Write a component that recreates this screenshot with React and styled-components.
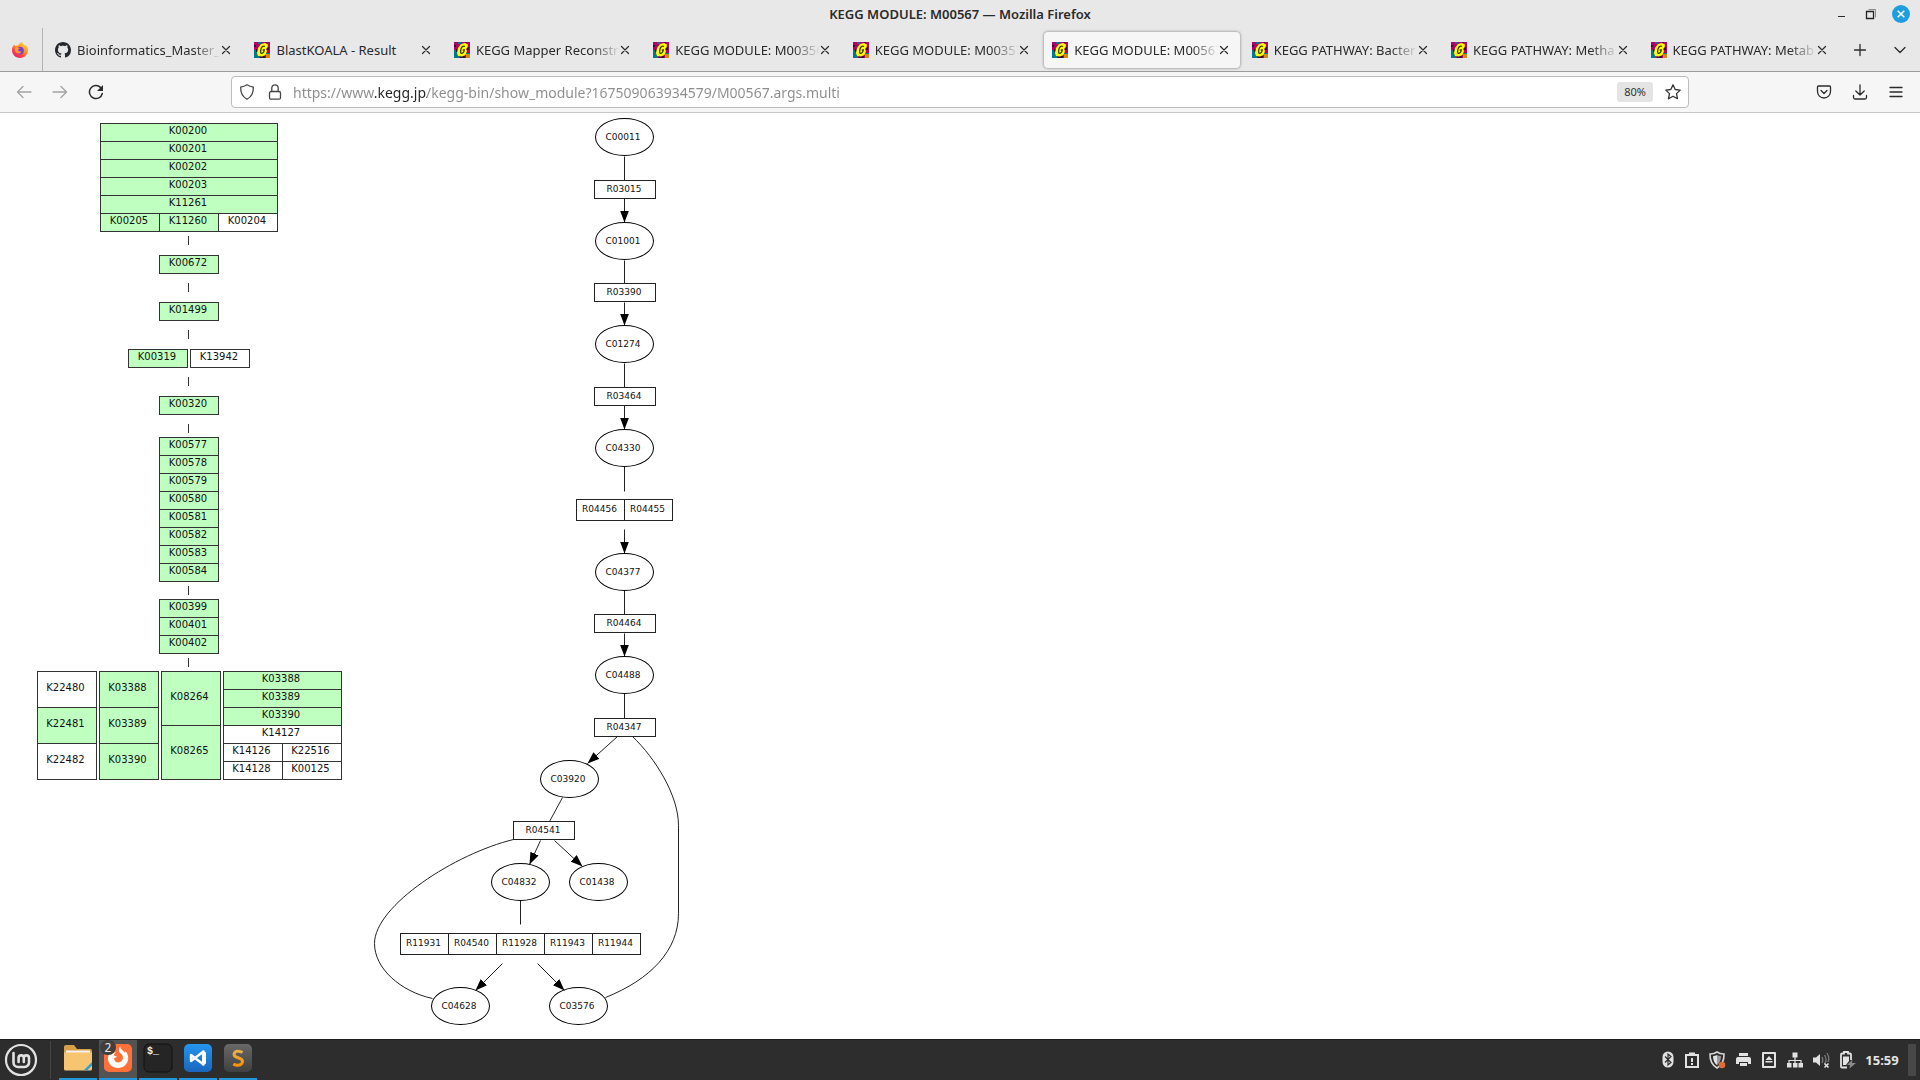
import React from 'react';
import styled, { createGlobalStyle, css } from 'styled-components';

const UI_FONT = '"Noto Sans", "Open Sans", sans-serif';
const GRAPH_FONT = '"DejaVu Sans", sans-serif';

const GlobalStyle = createGlobalStyle`
  *, *::before, *::after { box-sizing: border-box; }
  html, body { margin: 0; padding: 0; }
  body { background: #fff; font-family: ${UI_FONT}; color: #1f1f1f; }
  button, input { font: inherit; color: inherit; border: 0; background: none; padding: 0; margin: 0; }
  svg { display: block; flex: none; }
`;

const Screen = styled.div`
  display: flex;
  flex-direction: column;
  min-height: 100vh;
`;

/* ---------- title bar ---------- */

const TitleBar = styled.header`
  display: grid;
  grid-template-columns: 1fr auto 1fr;
  align-items: center;
  height: 28px;
  background: #e8e8e8;
`;

const WindowTitle = styled.h1`
  grid-column: 2;
  margin: 0;
  font-size: 13px;
  line-height: 20px;
  font-weight: 600;
  color: #2b2b2b;
`;

const WindowControls = styled.div`
  display: flex;
  justify-content: flex-end;
  gap: 10px;
  padding-right: 9px;
`;

const ControlButton = styled.button`
  display: grid;
  place-items: center;
  width: 20px;
  height: 20px;
`;

/* ---------- tabs ---------- */

const TabBar = styled.nav`
  display: flex;
  height: 44px;
  background: #e8e8e8;
  border-bottom: 1px solid #9c9c9c;
`;

const PinnedTab = styled.button`
  display: grid;
  place-items: center;
  width: 43px;
  padding-right: 2px;
  border-right: 1px solid #b4b4b4;
`;

const TabList = styled.div`
  flex: 1;
  display: flex;
  min-width: 0;
  padding: 4px 0 3px 2px;
`;

const Tab = styled.div`
  flex: 1 1 0;
  min-width: 0;
  display: flex;
  align-items: center;
  gap: 6px;
  margin: 0 2px;
  padding: 0 8px;
  border-radius: 4px;
  ${(p) => p.$active && css`
    background: #f6f6f6;
    box-shadow: 0 0 3px rgba(0, 0, 0, 0.5);
  `}
`;

const TabTitle = styled.button`
  flex: 1;
  min-width: 0;
  overflow: hidden;
  white-space: nowrap;
  text-align: left;
  font-size: 13px;
  line-height: 20px;
  color: #2a2a2a;
  ${(p) => p.$fade && css`
    mask-image: linear-gradient(to left, transparent, #000 28px);
  `}
`;

const TabClose = styled.button`
  display: grid;
  place-items: center;
  width: 16px;
  height: 20px;
  margin-left: -9px;
`;

const TabBarButton = styled.button`
  display: grid;
  place-items: center;
  width: 40px;
`;

/* ---------- toolbar ---------- */

const Toolbar = styled.div`
  display: flex;
  align-items: center;
  justify-content: space-between;
  height: 41px;
  padding: 0 6px;
  background: #f6f6f6;
  border-bottom: 1px solid #c8c8c8;
`;

const ToolGroup = styled.div`
  display: flex;
  justify-content: ${(p) => p.$end ? 'flex-end' : 'flex-start'};
  width: 225px;
`;

const ToolButton = styled.button`
  display: grid;
  place-items: center;
  width: 36px;
  height: 32px;
`;

const AddressBox = styled.form`
  flex: 1;
  display: flex;
  align-items: center;
  height: 32px;
  padding: 0 1px;
  background: #fff;
  border: 1px solid #bdbdbd;
  border-radius: 4px;
`;

const AddressIcon = styled.button`
  display: grid;
  place-items: center;
  width: 28px;
  height: 28px;
`;

const AddressInput = styled.input`
  flex: 1;
  min-width: 0;
  height: 28px;
  padding: 0 4px;
  font-size: 14px;
  line-height: 20px;
  outline: none;
  color: transparent;
  caret-color: #222;
  background: linear-gradient(to right, #8c8c8c 85px, #222 85px, #222 138px, #8c8c8c 138px);
  background-clip: text;
  -webkit-background-clip: text;
`;

const ZoomBadge = styled.button`
  width: 36px;
  height: 20px;
  margin-right: 6px;
  border-radius: 3px;
  background: #e4e4e4;
  font-size: 11px;
  line-height: 20px;
  color: #333;
`;

/* ---------- page ---------- */

const Page = styled.main`
  flex: 1;
  display: flex;
  align-items: flex-start;
  background: #fff;
  font-family: ${GRAPH_FONT};
  color: #111;
`;

const ModuleColumn = styled.section`
  display: flex;
  flex-direction: column;
  align-items: center;
  width: 304px;
  margin: 10px 19px 0 37px;
`;

const Block = styled.div`
  display: grid;
  grid-template-columns: repeat(${(p) => p.$cols || 1}, 59px);
  grid-auto-rows: 18px;
  padding: 0 1px 1px 0;
`;

const BlockRow = styled.div`
  display: flex;
  gap: 2px;
`;

const Gene = styled.div`
  display: flex;
  align-items: center;
  justify-content: center;
  grid-column: span ${(p) => p.$w || 1};
  grid-row: span ${(p) => p.$h || 1};
  margin: 0 -1px -1px 0;
  padding: 0 2px 3px 0;
  border: 1px solid #333;
  background: ${(p) => p.$on ? '#bfffbf' : '#fff'};
  font-size: 10px;
  line-height: 12px;
`;

const Connector = styled.div`
  width: 1px;
  height: 9px;
  margin: ${(p) => p.$above ? 9 : 4}px 1px ${(p) => p.$below ? 10 : 4}px 0;
  background: #333;
`;

const Graph = styled.section`
  position: relative;
  width: 340px;
  height: 920px;
`;

const Edges = styled.svg`
  position: absolute;
  inset: 0;
`;

const Node = styled.div`
  position: absolute;
  left: ${(p) => p.$x}px;
  top: ${(p) => p.$y}px;
  display: flex;
  border: 1px solid #222;
  font-size: 9px;
  line-height: 12px;
`;

const Compound = styled(Node)`
  align-items: center;
  justify-content: center;
  width: 59px;
  height: 38px;
  padding: 0 3px 1px 0;
  border-color: #000;
  border-radius: 50%;
`;

const Reaction = styled(Node)`
  height: ${(p) => p.$group ? 22 : 19}px;
`;

const ReactionCell = styled.span`
  display: flex;
  align-items: center;
  justify-content: center;
  width: ${(p) => p.$group ? 47 : 60}px;
  padding: 0 2px 2px 0;
  & + & {
    width: 48px;
    border-left: 1px solid #222;
  }
`;

/* ---------- taskbar ---------- */

const Taskbar = styled.footer`
  display: flex;
  align-items: stretch;
  height: 41px;
  background: #2d2d2d;
  border-top: 1px solid #1e1e1e;
`;

const MenuButton = styled.button`
  display: grid;
  place-items: center;
  width: 42px;
`;

const PanelDivider = styled.span`
  width: 1px;
  margin: 1px 8px;
  background: #454545;
`;

const Launchers = styled.div`
  display: flex;
  gap: 2px;
`;

const Launcher = styled.button`
  position: relative;
  display: grid;
  place-items: center;
  width: 38px;
  padding-bottom: 2px;
  border-bottom: 2px solid #2196d8;
  background: ${(p) => p.$active ? '#535353' : 'transparent'};
`;

const WindowCount = styled.span`
  position: absolute;
  left: 1px;
  top: 0;
  width: 16px;
  height: 15px;
  border-radius: 8px;
  background: #3f3f3f;
  color: #e6e6e6;
  font-size: 12px;
  line-height: 15px;
`;

const Tray = styled.div`
  display: flex;
  align-items: center;
  gap: 2px;
  margin-left: auto;
  padding-right: 4px;
`;

const TrayButton = styled.button`
  display: grid;
  place-items: center;
  width: ${(p) => p.$narrow ? 22 : 24}px;
  height: 24px;
`;

const Clock = styled.time`
  width: 42px;
  text-align: center;
  font-size: 13px;
  line-height: 20px;
  font-weight: 700;
  color: #e4e4e4;
`;

const ShowDesktop = styled.button`
  width: 8px;
  height: 32px;
  margin-left: 3px;
  background: #484848;
`;

/* ---------- icons ---------- */

const Stroke = ({ size = 16, color = '#2b2b2b', width = 1.3, children }) => (
  <svg width={size} height={size} viewBox="0 0 16 16" fill="none" stroke={color} strokeWidth={width} strokeLinecap="round" strokeLinejoin="round">
    {children}
  </svg>
);

const KeggIcon = () => (
  <svg width="16" height="16" viewBox="0 0 16 16">
    <path fill="#b4006c" d="M0 0h16v16H0z" />
    <path fill="#00788c" d="M0 8h3v4h2v4H0zM4 0h3v2H4zM12 11h4v5h-4z" />
    <path fill="#3a1030" d="M0 3h2v2H0zM2 7h2v3H2zM6 14h5v2H6zM13 5h2v3h-2zM11 0h2v1h-2z" />
    <path fill="#d08a10" d="M12 12h4v4h-4z" />
    <path fill="#ff0" d="M7 2l4-1 3 1.500-.5 3L12 7l1 2-1.500 4-3.500 1.500-4-.5-1-3 1-5z" />
    <path fill="none" stroke="#3c3c10" strokeWidth="1.300" d="M11 4.500C9 3.500 7.500 5 7 7s-.8 4.500.8 4.300S10 10 10.300 8H8.700" />
  </svg>
);

const GithubIcon = () => (
  <svg width="16" height="16" viewBox="0 0 16 16" fill="#24292f">
    <path d="M8 0C3.580 0 0 3.580 0 8c0 3.540 2.290 6.530 5.470 7.590.4.070.55-.17.55-.38 0-.19-.01-.82-.01-1.490-2.010.37-2.530-.49-2.690-.94-.09-.23-.48-.94-.82-1.130-.28-.15-.68-.52-.01-.53.63-.01 1.080.58 1.230.82.72 1.210 1.870.87 2.330.66.07-.52.28-.87.51-1.070-1.780-.2-3.640-.89-3.640-3.950 0-.87.31-1.590.82-2.150-.08-.2-.36-1.020.08-2.120 0 0 .67-.21 2.200.82.64-.18 1.320-.27 2-.27s1.360.09 2 .27c1.530-1.040 2.200-.82 2.200-.82.44 1.100.16 1.920.08 2.120.51.56.82 1.270.82 2.150 0 3.070-1.870 3.750-3.650 3.950.29.25.54.73.54 1.480 0 1.070-.01 1.930-.01 2.200 0 .21.15.46.55.38A8.010 8.010 0 0 0 16 8c0-4.420-3.580-8-8-8z" />
  </svg>
);

const FirefoxIcon = () => (
  <svg width="16" height="16" viewBox="0 0 16 16">
    <defs>
      <linearGradient id="fox" x1="0.9" y1="0" x2="0.2" y2="1">
        <stop offset="0" stopColor="#ffe536" />
        <stop offset="0.45" stopColor="#ff9228" />
        <stop offset="0.75" stopColor="#ff3b4c" />
        <stop offset="1" stopColor="#e31587" />
      </linearGradient>
    </defs>
    <path fill="url(#fox)" d="M10 0c.3 1.700 2 2.500 3.500 4 .3-.2.300-.8.200-1.200C15 4.200 16 6.300 16 8.300 16 12.600 12.500 16 8 16S0 12.600 0 8.300C0 6 .8 4 2.300 2.600L3 4.200C3.800 3.500 5 3.300 6 3.500 7 1.500 8.500.5 10 0z" />
    <circle cx="8" cy="8.600" r="3.800" fill="#7540d8" />
    <path fill="#ff9a2c" d="M3.200 5.400c2-.9 3.300.2 4.800 1.200-1.500.2-2 1.100-1.800 1.800.3 1.300 2.300 1.500 3.300.5-.3 2.500-3.500 3.400-5.300 1.800C3 9.500 2.600 7.300 3.200 5.400z" />
  </svg>
);

const CloseIcon = () => (
  <Stroke size={16} width={1.2}><path d="M4.500 4.500l7 7M11.500 4.500l-7 7" /></Stroke>
);

const MintIcon = () => (
  <svg width="34" height="34" viewBox="0 0 34 34" fill="none" stroke="#e2e2e2">
    <circle cx="17" cy="17" r="15" strokeWidth="2.200" />
    <path strokeWidth="2.600" strokeLinecap="round" strokeLinejoin="round" d="M9.500 10v9.500a4.500 4.500 0 0 0 4.500 4.500h6.500a4.500 4.500 0 0 0 4.500-4.500V15a2.600 2.600 0 0 0-5.200 0v4M19.800 15a2.600 2.600 0 0 0-5.200 0v4" />
  </svg>
);

const FolderIcon = () => (
  <svg width="28" height="26" viewBox="0 0 28 26">
    <path fill="#d9a04a" d="M0 2q0-2 2-2h8l3 4h13q2 0 2 2v6H0z" />
    <path fill="#f2f2f2" d="M2 5.500h24v4H2z" />
    <path fill="#f7c471" d="M0 7.500h28V24q0 1.500-1.500 1.500h-25Q0 25.500 0 24z" />
    <path fill="#2a9fd8" d="M28 17V20.500L23 25.500H19.500z" />
  </svg>
);

const FirefoxTile = () => (
  <svg width="30" height="30" viewBox="0 0 30 30">
    <rect x="1" y="1" width="28" height="28" rx="5" fill="#ff7139" />
    <path fill="#fff" d="M17 3.500c.3 2.600 3 4 5 6.300.3-.5.400-1.200.3-1.800 2 2 3 4.700 2.900 7.300C25 21 20.600 25 15 25S5 20.800 5 15.500c0-3 1-5.500 3-7.300.1 1 .3 1.600.8 2.200C10 9.500 11.500 9.300 13 9.600c-1.500.7-2.200 1.800-2 2.600.3.700 1.500 1 2.800 1-.5 1.300-1.800 1.500-2.800 2 .2 2.800 2 4.300 4.300 4.300 2.800 0 4.700-2.200 4.700-4.700 0-1.800-.9-3.300-2.200-4.200C16 9.500 15 6.500 17 3.500z" />
  </svg>
);

const TerminalTile = () => (
  <svg width="30" height="30" viewBox="0 0 30 30">
    <rect x="1" y="1" width="28" height="28" rx="5" fill="#252525" stroke="#111" />
    <text x="4" y="11" fill="#f0f0f0" fontFamily="Liberation Mono, monospace" fontWeight="700" fontSize="10">$_</text>
  </svg>
);

const CodeTile = () => (
  <svg width="30" height="30" viewBox="0 0 30 30">
    <defs><linearGradient id="code" x2="0" y2="1"><stop stopColor="#2595ee" /><stop offset="1" stopColor="#1966bd" /></linearGradient></defs>
    <rect x="1" y="1" width="28" height="28" rx="5" fill="url(#code)" />
    <path fill="none" stroke="#fff" strokeWidth="2.400" strokeLinejoin="round" d="M8 12v6l12.500-9.500v13z" />
    <path fill="#fff" d="M19 7.500l4 2v11l-4 2z" />
  </svg>
);

const SublimeTile = () => (
  <svg width="30" height="30" viewBox="0 0 30 30">
    <defs>
      <linearGradient id="subl" x2="0" y2="1"><stop stopColor="#686868" /><stop offset="1" stopColor="#404040" /></linearGradient>
      <linearGradient id="sublS" x2="0" y2="1"><stop stopColor="#e8b04c" /><stop offset="1" stopColor="#ff9000" /></linearGradient>
    </defs>
    <rect x="1" y="1" width="28" height="28" rx="5" fill="url(#subl)" />
    <path fill="none" stroke="url(#sublS)" strokeWidth="3" d="M19.500 9.500c-2-1.300-4-1.500-5.500-1.200-2.300.5-3.300 2.200-2.800 4 1 3.200 8 1.800 8.300 6 .2 2-1.500 3.700-4.200 3.900-1.800.1-3.500-.3-5-1.300" />
  </svg>
);

/* ---------- data ---------- */

const TABS = [
  { title: 'Bioinformatics_Master_', icon: 'github', fade: true },
  { title: 'BlastKOALA - Result' },
  { title: 'KEGG Mapper Reconstru', fade: true },
  { title: 'KEGG MODULE: M00356', fade: true },
  { title: 'KEGG MODULE: M00357', fade: true },
  { title: 'KEGG MODULE: M00567', fade: true, active: true },
  { title: 'KEGG PATHWAY: Bacter', fade: true },
  { title: 'KEGG PATHWAY: Metha', fade: true },
  { title: 'KEGG PATHWAY: Metab', fade: true },
];

const on = (id, w, h) => ({ id, w, h, on: true });
const off = (id, w, h) => ({ id, w, h, on: false });

const MODULE = [
  [{ cols: 3, genes: [on('K00200', 3), on('K00201', 3), on('K00202', 3), on('K00203', 3), on('K11261', 3), on('K00205'), on('K11260'), off('K00204')] }],
  [{ genes: [on('K00672')] }],
  [{ genes: [on('K01499')] }],
  [{ genes: [on('K00319')] }, { genes: [off('K13942')] }],
  [{ genes: [on('K00320')] }],
  [{ genes: ['K00577', 'K00578', 'K00579', 'K00580', 'K00581', 'K00582', 'K00583', 'K00584'].map((id) => on(id)) }],
  [{ genes: ['K00399', 'K00401', 'K00402'].map((id) => on(id)) }],
  [
    { genes: [off('K22480', 1, 2), on('K22481', 1, 2), off('K22482', 1, 2)] },
    { genes: [on('K03388', 1, 2), on('K03389', 1, 2), on('K03390', 1, 2)] },
    { genes: [on('K08264', 1, 3), on('K08265', 1, 3)] },
    { cols: 2, genes: [on('K03388', 2), on('K03389', 2), on('K03390', 2), off('K14127', 2), off('K14126'), off('K22516'), off('K14128'), off('K00125')] },
  ],
];

const isSingle = (row) => row.every((block) => block.genes.length === 1);

const COMPOUNDS = [
  ['C00011', 235, 5], ['C01001', 235, 109], ['C01274', 235, 212], ['C04330', 235, 316],
  ['C04377', 235, 440], ['C04488', 235, 543], ['C03920', 180, 647], ['C04832', 131, 750],
  ['C01438', 209, 750], ['C04628', 71, 874], ['C03576', 189, 874],
];

const REACTIONS = [
  [['R03015'], 234, 67], [['R03390'], 234, 170], [['R03464'], 234, 274],
  [['R04456', 'R04455'], 216, 386], [['R04464'], 234, 501], [['R04347'], 234, 605],
  [['R04541'], 153, 708], [['R11931', 'R04540', 'R11928', 'R11943', 'R11944'], 40, 820],
];

const LINES = [
  [264, 43, 264, 67], [264, 147, 264, 170], [264, 250, 264, 274], [264, 353, 264, 378],
  [264, 477, 264, 501], [264, 580, 264, 605], [202, 684, 189, 708], [160, 787, 160, 811],
];

const ARROWS = [
  [264, 85, 264, 109], [264, 189, 264, 212], [264, 292, 264, 316], [264, 416, 264, 440],
  [264, 520, 264, 543], [257, 623, 227, 650], [180, 727, 169, 751], [194, 727, 222, 753],
  [142, 850, 115, 877], [177, 850, 204, 877],
];

const TRAY = [
  ['Bluetooth', <g key="i"><rect x="3.500" y="0.500" width="11" height="16" rx="5.500" fill="#e2e2e2" /><path d="M6 5.500l6 6L9 14V3l3 2.500-6 6" fill="none" stroke="#2d2d2d" strokeWidth="1.200" /></g>],
  ['Clipboard', <g key="i" fill="#e2e2e2"><path d="M2 3h14v14H2zM4 5v10h10V5z" fillRule="evenodd" /><path d="M6 1.500h6V5H6zM8 7h2v4H8zM8 12h2v2H8z" /></g>],
  ['Updates', <g key="i"><path d="M9 1c2 1.500 4.500 2 7 2 .2 6-2 11-7 14C4 14 1.800 9 2 3c2.500 0 5-.5 7-2z" fill="none" stroke="#d6d6d6" strokeWidth="1.600" /><path d="M9 4c1.500.8 2.700 1 4 1.200 0 4-1.500 7-4 9z" fill="#9a9a9a" /><path d="M9 4C7.500 4.800 6.300 5 5 5.200c0 4 1.500 7 4 9z" fill="#e2e2e2" /><circle cx="14" cy="14" r="3.300" fill="#e06c3a" /></g>],
  ['Printer', <g key="i" fill="#e2e2e2"><path d="M5 2h9v3H5zM4 6h11q2 0 2 2v5h-3v-2H5v2H2V8q0-2 2-2zM6 12h7v3H6z" /></g>],
  ['Removable drives', <g key="i" fill="#e2e2e2"><path fillRule="evenodd" d="M3 1h12q1 0 1 1v14q0 1-1 1H3q-1 0-1-1V2q0-1 1-1zm1 2v12h10V3z" /><path d="M9 5l3.500 4h-7zM5.500 10h7v1.500h-7z" /></g>],
  ['Network', <g key="i"><path d="M6.500 1.500h5v5h-5zM1 12h4.500v4.500H1zM7 12h4.500v4.500H7zM12.500 12H17v4.500h-4.500z" fill="#e2e2e2" /><path d="M9 6v7M3 13V9.500h12V13" fill="none" stroke="#e2e2e2" strokeWidth="1.200" /></g>],
  ['Volume muted', <g key="i"><path d="M1 6.500h3L8 3v12l-4-3.500H1z" fill="#e2e2e2" /><path d="M10 6q1.500 3 0 6M12.500 4q3 5 0 9M15 2q3 5 1 9" fill="none" stroke="#777" strokeWidth="1.400" /><path d="M12.500 12.500l4 4M16.500 12.500l-4 4" stroke="#e2e2e2" strokeWidth="1.600" /></g>],
  ['Battery', <g key="i"><path d="M4 2.500h2V1h4v1.500h2q1 0 1 1V9M9 16.500H4q-1 0-1-1v-12q0-1 1-1" fill="none" stroke="#e2e2e2" strokeWidth="1.800" /><path d="M5 5.500h6V10l-3 4H5z" fill="#e2e2e2" /><path d="M14.500 8.500L9 14h3l-.5 3.500L18 12h-4z" fill="#8a8a8a" /></g>],
];

/* ---------- app ---------- */

export default function App() {
  return (
    <Screen>
      <GlobalStyle />
      <TitleBar>
        <WindowTitle>KEGG MODULE: M00567 — Mozilla Firefox</WindowTitle>
        <WindowControls>
          <ControlButton aria-label="Minimize">
            <svg width="20" height="20" viewBox="0 0 20 20"><path fill="#2b2b2b" d="M7 12h7v1H7z" /></svg>
          </ControlButton>
          <ControlButton aria-label="Restore">
            <svg width="20" height="20" viewBox="0 0 20 20" fill="none"><path d="M7.500 5.500h7v8" stroke="#8a8a8a" /><path d="M5.500 7.500h7v7h-7z" stroke="#222" strokeWidth="1.300" /></svg>
          </ControlButton>
          <ControlButton aria-label="Close">
            <svg width="20" height="20" viewBox="0 0 20 20"><circle cx="10" cy="10" r="9" fill="#1f9ede" /><path d="M6.700 6.700l6.600 6.600M13.300 6.700l-6.600 6.600" stroke="#fff" strokeWidth="1.500" /></svg>
          </ControlButton>
        </WindowControls>
      </TitleBar>

      <TabBar>
        <PinnedTab aria-label="Firefox"><FirefoxIcon /></PinnedTab>
        <TabList>
          {TABS.map((tab) => (
            <Tab key={tab.title} $active={tab.active}>
              {tab.icon === 'github' ? <GithubIcon /> : <KeggIcon />}
              <TabTitle $fade={tab.fade}>{tab.title}</TabTitle>
              <TabClose aria-label="Close tab"><CloseIcon /></TabClose>
            </Tab>
          ))}
        </TabList>
        <TabBarButton aria-label="New tab"><Stroke><path d="M8 2.500v11M2.500 8h11" /></Stroke></TabBarButton>
        <TabBarButton aria-label="List all tabs"><Stroke><path d="M3 5.500L8 10.500l5-5" /></Stroke></TabBarButton>
      </TabBar>

      <Toolbar>
        <ToolGroup>
          <ToolButton aria-label="Back"><Stroke color="#a3a3a3"><path d="M15 8H1.500M7 2.500L1.500 8 7 13.500" /></Stroke></ToolButton>
          <ToolButton aria-label="Forward"><Stroke color="#a3a3a3"><path d="M1 8h13.500M9 2.500L14.500 8 9 13.500" /></Stroke></ToolButton>
          <ToolButton aria-label="Reload"><Stroke width={1.5}><path d="M14.300 9.500A6.500 6.500 0 1 1 12.500 3.400L14 5" /><path fill="#2b2b2b" stroke="none" d="M15 1v6H9z" /></Stroke></ToolButton>
        </ToolGroup>
        <AddressBox onSubmit={(e) => e.preventDefault()}>
          <AddressIcon type="button" aria-label="Tracking protection"><Stroke color="#444"><path d="M8 .8c2 1.300 4 2 6.300 2.300.3 5.500-1.500 9.500-6.300 12.100C3.200 12.600 1.400 8.600 1.700 3.100 4 2.800 6 2.100 8 .8z" /></Stroke></AddressIcon>
          <AddressIcon type="button" aria-label="Connection secure"><Stroke color="#444"><rect x="2.500" y="7.500" width="11" height="7.700" rx="1.500" /><path d="M4.800 7.500V4a3.200 3.200 0 0 1 6.400 0v3.500" /></Stroke></AddressIcon>
          <AddressInput aria-label="Address" spellCheck={false} defaultValue="https://www.kegg.jp/kegg-bin/show_module?167509063934579/M00567.args.multi" />
          <ZoomBadge type="button">80%</ZoomBadge>
          <AddressIcon type="button" aria-label="Bookmark"><Stroke color="#333"><path d="M8 .8l2.200 4.700 5 .6-3.700 3.500 1 5.100L8 12.200l-4.500 2.500 1-5.100L.8 6.100l5-.6z" /></Stroke></AddressIcon>
        </AddressBox>
        <ToolGroup $end>
          <ToolButton aria-label="Save to Pocket"><Stroke><path d="M2.500 2h11q1 0 1 1v4.500a6.500 6.500 0 0 1-13 0V3q0-1 1-1zM5 6.500l3 3 3-3" /></Stroke></ToolButton>
          <ToolButton aria-label="Downloads"><Stroke><path d="M8 .8v10M3.800 7L8 11l4.200-4M1.500 11.500v2q0 1.500 1.500 1.500h10q1.500 0 1.500-1.500v-2" /></Stroke></ToolButton>
          <ToolButton aria-label="Menu"><Stroke><path d="M2 3.500h12M2 8h12M2 12.500h12" /></Stroke></ToolButton>
        </ToolGroup>
      </Toolbar>

      <Page>
        <ModuleColumn>
          {MODULE.map((row, i) => (
            <React.Fragment key={i}>
              {i > 0 && <Connector $above={isSingle(MODULE[i - 1])} $below={isSingle(row)} />}
              <BlockRow>
                {row.map((block, j) => (
                  <Block key={j} $cols={block.cols}>
                    {block.genes.map((g) => (
                      <Gene key={g.id} $w={g.w} $h={g.h} $on={g.on}>{g.id}</Gene>
                    ))}
                  </Block>
                ))}
              </BlockRow>
            </React.Fragment>
          ))}
        </ModuleColumn>

        <Graph>
          <Edges width="340" height="920" viewBox="0 0 340 920" fill="none" stroke="#222">
            <defs>
              <marker id="arrow" markerUnits="userSpaceOnUse" markerWidth="12" markerHeight="9" refX="12" refY="4.500" orient="auto">
                <path d="M0 0l12 4.500-12 4.500z" fill="#000" stroke="none" />
              </marker>
            </defs>
            <g transform="translate(0.500 0.500)">
              {LINES.map((l) => <path key={l.join()} d={`M${l[0]} ${l[1]}L${l[2]} ${l[3]}`} />)}
              {ARROWS.map((l) => <path key={l.join()} d={`M${l[0]} ${l[1]}L${l[2]} ${l[3]}`} markerEnd="url(#arrow)" />)}
              <path d="M153 726C95 740 14 792 14 830C14 855 40 878 72 885" />
              <path d="M272 623C295 645 318 682 318 712V800C318 837 290 866 245 884" />
            </g>
          </Edges>
          {COMPOUNDS.map(([id, x, y]) => <Compound key={id} $x={x} $y={y}>{id}</Compound>)}
          {REACTIONS.map(([ids, x, y]) => (
            <Reaction key={ids[0]} $x={x} $y={y} $group={ids.length > 1}>
              {ids.map((id) => <ReactionCell key={id} $group={ids.length > 1}>{id}</ReactionCell>)}
            </Reaction>
          ))}
        </Graph>
      </Page>

      <Taskbar>
        <MenuButton aria-label="Menu"><MintIcon /></MenuButton>
        <PanelDivider />
        <Launchers>
          <Launcher aria-label="Files"><FolderIcon /></Launcher>
          <Launcher aria-label="Firefox" $active><FirefoxTile /><WindowCount>2</WindowCount></Launcher>
          <Launcher aria-label="Terminal"><TerminalTile /></Launcher>
          <Launcher aria-label="Visual Studio Code"><CodeTile /></Launcher>
          <Launcher aria-label="Sublime Text"><SublimeTile /></Launcher>
        </Launchers>
        <Tray>
          {TRAY.map(([label, icon], i) => (
            <TrayButton key={label} aria-label={label} $narrow={i < 2}>
              <svg width="18" height="18" viewBox="0 0 18 18">{icon}</svg>
            </TrayButton>
          ))}
          <Clock>15:59</Clock>
          <ShowDesktop aria-label="Show desktop" />
        </Tray>
      </Taskbar>
    </Screen>
  );
}
